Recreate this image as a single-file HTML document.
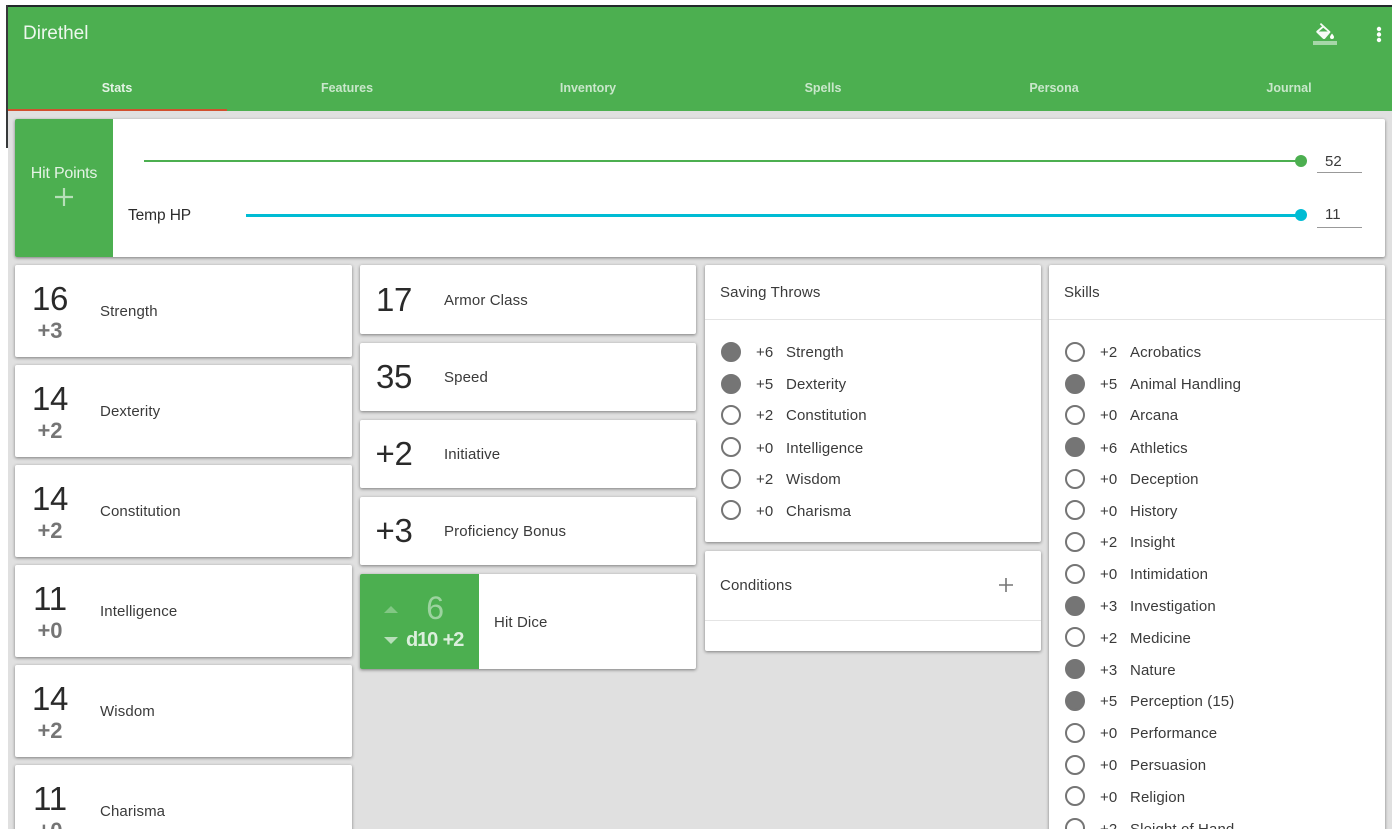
<!DOCTYPE html>
<html><head><meta charset="utf-8"><style>
html,body{margin:0;padding:0;width:1400px;height:840px;overflow:hidden;background:#fff}
body{font-family:"Liberation Sans",sans-serif;color:#333;position:relative}
#app{position:absolute;left:8px;top:7px;width:1384px;height:822px;background:#e0e0e0;overflow:hidden}
.a{position:absolute;white-space:nowrap}
.l{position:absolute;background:#37393a}
.bar{position:absolute;left:0;top:0;width:1384px;height:104px;background:#4caf50}
.tab{position:absolute;top:73px;font-size:12.5px;font-weight:bold;line-height:16px;color:rgba(255,255,255,.7);transform:translateX(-50%);white-space:nowrap}
.card{position:absolute;background:#fff;border-radius:2px;box-shadow:0 1px 3px rgba(0,0,0,.45)}
.big{position:absolute;font-size:33px;line-height:38px;color:#2a2a2a;white-space:nowrap;transform:translateX(-50%);letter-spacing:-.3px}
.mod{position:absolute;font-size:22px;line-height:24px;font-weight:bold;color:#757575;white-space:nowrap;transform:translateX(-50%);margin-top:1px}
.t{position:absolute;font-size:15px;line-height:20px;color:#3a3a3a;white-space:nowrap;letter-spacing:.12px;margin-top:1px}
.r{position:absolute;width:16px;height:16px;border:2px solid #757575;border-radius:50%;margin:-1px 0 0 -1px}
.f{background:#757575}
.h{position:absolute;left:0;top:54px;width:100%;height:1px;background:#e4e4e4}
</style></head><body>
<div class="l" style="left:6px;top:5px;width:1386px;height:2px;background:#22282a"></div>
<div class="l" style="left:6px;top:5px;width:2px;height:143px"></div>
<div id="app">
<div class="bar"></div>
<div class="a" style="left:15px;top:15px;font-size:19px;line-height:24px;color:rgba(255,255,255,.9)">Direthel</div>
<svg class="a" style="left:1302px;top:14px" width="30" height="32" viewBox="0 0 30 32"><path d="M11 2 L9.8 3.2 L12 5.4 L6.5 10 Q6 10.8 6.5 11.5 L13 17.7 Q14 18.3 15 17.7 L20.3 11.5 Q20.7 11 20.3 10.5 Z M13.3 6.8 L17.8 10.5 H8.8 Z" fill="#fff" fill-rule="evenodd" fill-opacity=".95"/><path d="M22 12.5 Q20 15 20 16 A2 2 0 0 0 24 16 Q24 15 22 12.5Z" fill="#fff"/><rect x="3" y="20" width="24" height="4" fill="#fff" fill-opacity=".5"/></svg>
<svg class="a" style="left:1367px;top:19px" width="8" height="18" viewBox="0 0 8 18"><circle cx="4" cy="3" r="2.2" fill="#fff"/><circle cx="4" cy="8.5" r="2.2" fill="#fff"/><circle cx="4" cy="14" r="2.2" fill="#fff"/></svg>
<div class="tab" style="left:109px;color:rgba(255,255,255,.85)">Stats</div>
<div class="tab" style="left:339px">Features</div>
<div class="tab" style="left:580px">Inventory</div>
<div class="tab" style="left:815px">Spells</div>
<div class="tab" style="left:1046px">Persona</div>
<div class="tab" style="left:1281px">Journal</div>
<div class="a" style="left:0;top:102px;width:219px;height:2px;background:#d1502f"></div>

<div class="card" style="left:7px;top:112px;width:1370px;height:138px"></div>
<div class="a" style="left:7px;top:112px;width:98px;height:138px;background:#4caf50;border-radius:2px 0 0 2px"></div>
<div class="a" style="left:7px;top:157px;width:98px;text-align:center;font-size:16px;line-height:20px;color:rgba(255,255,255,.85);letter-spacing:-.2px">Hit Points</div>
<svg class="a" style="left:46px;top:180px" width="20" height="20"><path d="M10 1V19M1 10H19" stroke="#fff" stroke-opacity=".6" stroke-width="2.2"/></svg>
<div class="a" style="left:136px;top:153px;width:1157px;height:2px;background:#4caf50"></div>
<div class="a" style="left:1287px;top:148px;width:12px;height:12px;border-radius:50%;background:#4caf50"></div>
<div class="t" style="left:1317px;top:144px;letter-spacing:0">52</div>
<div class="a" style="left:1309px;top:165px;width:45px;height:1px;background:#999"></div>
<div class="t" style="left:120px;top:198px;color:#2c2c2c;font-size:15.5px;letter-spacing:-.1px">Temp HP</div>
<div class="a" style="left:238px;top:207px;width:1055px;height:3px;background:#00bcd4"></div>
<div class="a" style="left:1287px;top:202px;width:12px;height:12px;border-radius:50%;background:#00bcd4"></div>
<div class="t" style="left:1317px;top:197px;letter-spacing:0">11</div>
<div class="a" style="left:1309px;top:220px;width:45px;height:1px;background:#999"></div>

<div class="card" style="left:7px;top:258px;width:337px;height:92px"></div>
<div class="big" style="left:42px;top:273px">16</div><div class="mod" style="left:42px;top:311px">+3</div><div class="t" style="left:92px;top:294px">Strength</div>
<div class="card" style="left:7px;top:358px;width:337px;height:92px"></div>
<div class="big" style="left:42px;top:373px">14</div><div class="mod" style="left:42px;top:411px">+2</div><div class="t" style="left:92px;top:394px">Dexterity</div>
<div class="card" style="left:7px;top:458px;width:337px;height:92px"></div>
<div class="big" style="left:42px;top:473px">14</div><div class="mod" style="left:42px;top:511px">+2</div><div class="t" style="left:92px;top:494px">Constitution</div>
<div class="card" style="left:7px;top:558px;width:337px;height:92px"></div>
<div class="big" style="left:42px;top:573px">11</div><div class="mod" style="left:42px;top:611px">+0</div><div class="t" style="left:92px;top:594px">Intelligence</div>
<div class="card" style="left:7px;top:658px;width:337px;height:92px"></div>
<div class="big" style="left:42px;top:673px">14</div><div class="mod" style="left:42px;top:711px">+2</div><div class="t" style="left:92px;top:694px">Wisdom</div>
<div class="card" style="left:7px;top:758px;width:337px;height:92px"></div>
<div class="big" style="left:42px;top:773px">11</div><div class="mod" style="left:42px;top:811px">+0</div><div class="t" style="left:92px;top:794px">Charisma</div>

<div class="card" style="left:352px;top:258px;width:336px;height:69px"></div>
<div class="big" style="left:386px;top:274px">17</div><div class="t" style="left:436px;top:283px">Armor Class</div>
<div class="card" style="left:352px;top:336px;width:336px;height:68px"></div>
<div class="big" style="left:386px;top:351px">35</div><div class="t" style="left:436px;top:360px">Speed</div>
<div class="card" style="left:352px;top:413px;width:336px;height:68px"></div>
<div class="big" style="left:386px;top:428px">+2</div><div class="t" style="left:436px;top:437px">Initiative</div>
<div class="card" style="left:352px;top:490px;width:336px;height:68px"></div>
<div class="big" style="left:386px;top:505px">+3</div><div class="t" style="left:436px;top:514px">Proficiency Bonus</div>
<div class="card" style="left:352px;top:567px;width:336px;height:95px"></div>
<div class="a" style="left:352px;top:567px;width:119px;height:95px;background:#4caf50;border-radius:2px 0 0 2px"></div>
<div class="a" style="left:376px;top:599px;width:0;height:0;border-left:7px solid transparent;border-right:7px solid transparent;border-bottom:7px solid rgba(255,255,255,.3)"></div>
<div class="a" style="left:376px;top:630px;width:0;height:0;border-left:7px solid transparent;border-right:7px solid transparent;border-top:7px solid rgba(255,255,255,.6)"></div>
<div class="big" style="left:427px;top:582px;font-size:32px;color:rgba(255,255,255,.45)">6</div>
<div class="a" style="left:398px;top:621px;font-size:20px;line-height:24px;font-weight:bold;color:rgba(255,255,255,.8);letter-spacing:-1.1px;word-spacing:1px">d10 +2</div>
<div class="t" style="left:486px;top:605px">Hit Dice</div>

<div class="card" style="left:697px;top:258px;width:336px;height:277px"><div class="h"></div></div>
<div class="t" style="left:712px;top:275px">Saving Throws</div>
<div class="r f" style="left:714px;top:336px"></div><div class="t" style="left:748px;top:335px">+6</div><div class="t" style="left:778px;top:335px">Strength</div>
<div class="r f" style="left:714px;top:368px"></div><div class="t" style="left:748px;top:367px">+5</div><div class="t" style="left:778px;top:367px">Dexterity</div>
<div class="r" style="left:714px;top:399px"></div><div class="t" style="left:748px;top:398px">+2</div><div class="t" style="left:778px;top:398px">Constitution</div>
<div class="r" style="left:714px;top:431px"></div><div class="t" style="left:748px;top:431px">+0</div><div class="t" style="left:778px;top:431px">Intelligence</div>
<div class="r" style="left:714px;top:463px"></div><div class="t" style="left:748px;top:462px">+2</div><div class="t" style="left:778px;top:462px">Wisdom</div>
<div class="r" style="left:714px;top:494px"></div><div class="t" style="left:748px;top:494px">+0</div><div class="t" style="left:778px;top:494px">Charisma</div>

<div class="card" style="left:697px;top:544px;width:336px;height:100px"><div class="h" style="top:69px"></div></div>
<div class="t" style="left:712px;top:568px">Conditions</div>
<svg class="a" style="left:990px;top:570px" width="16" height="16"><path d="M8 1V15M1 8H15" stroke="#757575" stroke-width="1.6"/></svg>

<div class="card" style="left:1041px;top:258px;width:336px;height:600px"><div class="h"></div></div>
<div class="t" style="left:1056px;top:275px">Skills</div>
<div class="r" style="left:1058px;top:336px"></div><div class="t" style="left:1092px;top:335px">+2</div><div class="t" style="left:1122px;top:335px">Acrobatics</div>
<div class="r f" style="left:1058px;top:368px"></div><div class="t" style="left:1092px;top:367px">+5</div><div class="t" style="left:1122px;top:367px">Animal Handling</div>
<div class="r" style="left:1058px;top:399px"></div><div class="t" style="left:1092px;top:398px">+0</div><div class="t" style="left:1122px;top:398px">Arcana</div>
<div class="r f" style="left:1058px;top:431px"></div><div class="t" style="left:1092px;top:431px">+6</div><div class="t" style="left:1122px;top:431px">Athletics</div>
<div class="r" style="left:1058px;top:463px"></div><div class="t" style="left:1092px;top:462px">+0</div><div class="t" style="left:1122px;top:462px">Deception</div>
<div class="r" style="left:1058px;top:494px"></div><div class="t" style="left:1092px;top:494px">+0</div><div class="t" style="left:1122px;top:494px">History</div>
<div class="r" style="left:1058px;top:526px"></div><div class="t" style="left:1092px;top:525px">+2</div><div class="t" style="left:1122px;top:525px">Insight</div>
<div class="r" style="left:1058px;top:558px"></div><div class="t" style="left:1092px;top:557px">+0</div><div class="t" style="left:1122px;top:557px">Intimidation</div>
<div class="r f" style="left:1058px;top:590px"></div><div class="t" style="left:1092px;top:589px">+3</div><div class="t" style="left:1122px;top:589px">Investigation</div>
<div class="r" style="left:1058px;top:621px"></div><div class="t" style="left:1092px;top:621px">+2</div><div class="t" style="left:1122px;top:621px">Medicine</div>
<div class="r f" style="left:1058px;top:653px"></div><div class="t" style="left:1092px;top:653px">+3</div><div class="t" style="left:1122px;top:653px">Nature</div>
<div class="r f" style="left:1058px;top:685px"></div><div class="t" style="left:1092px;top:684px">+5</div><div class="t" style="left:1122px;top:684px">Perception (15)</div>
<div class="r" style="left:1058px;top:717px"></div><div class="t" style="left:1092px;top:716px">+0</div><div class="t" style="left:1122px;top:716px">Performance</div>
<div class="r" style="left:1058px;top:749px"></div><div class="t" style="left:1092px;top:748px">+0</div><div class="t" style="left:1122px;top:748px">Persuasion</div>
<div class="r" style="left:1058px;top:780px"></div><div class="t" style="left:1092px;top:780px">+0</div><div class="t" style="left:1122px;top:780px">Religion</div>
<div class="r" style="left:1058px;top:812px"></div><div class="t" style="left:1092px;top:812px">+2</div><div class="t" style="left:1122px;top:812px">Sleight of Hand</div>
</div>
</body></html>
